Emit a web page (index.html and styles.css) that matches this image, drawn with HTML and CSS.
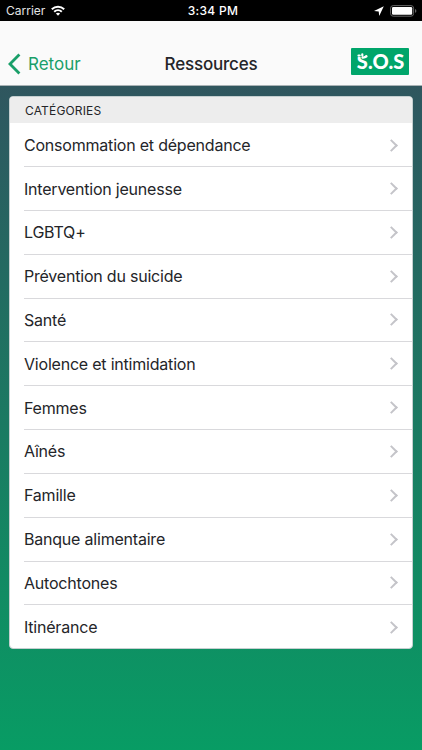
FILE: index.html
```html
<!DOCTYPE html>
<html lang="fr">
<head>
<meta charset="utf-8">
<title>Ressources</title>
<link rel="stylesheet" href="styles.css">
</head>
<body>
<div class="status">
  <div class="status-left"><span class="carrier">Carrier</span>
    <svg class="wifi" width="14" height="11" viewBox="0 0 14 11"><g fill="none" stroke="#fff" stroke-width="2"><path d="M.8 4.2C4.4.8 9.6.8 13.2 4.2"/><path d="M3.2 6.7c2.2-2.1 5.4-2.1 7.6 0"/></g><path d="M4.9 8.5c1.2-1.1 3-1.1 4.2 0L7 10.7z" fill="#fff"/></svg>
  </div>
  <div class="time">3:34 PM</div>
  <div class="status-right">
    <svg width="10" height="10" viewBox="0 0 10 10"><path d="M9.8.2 0 4.9l4.7.5.5 4.6z" fill="#fff"/></svg>
    <svg width="27" height="12" viewBox="0 0 27 12"><rect x=".6" y=".6" width="23" height="10.6" rx="2.6" fill="none" stroke="#666"/><rect x="2" y="2" width="20.2" height="7.8" rx="1.3" fill="#fff"/><path d="M25 4q1.4.5 1.4 1.9T25 7.8z" fill="#666"/></svg>
  </div>
</div>
<header class="nav">
  <div class="back">
    <svg width="13" height="22" viewBox="0 0 13 22"><path d="M11.4 1.6 2 11l9.4 9.4" fill="none" stroke="#1a9f69" stroke-width="2.8"/></svg>
    <span>Retour</span>
  </div>
  <h1 class="title">Ressources</h1>
  <div class="sos">
    <svg width="58" height="27" viewBox="0 0 58 27"><text class="sos-text" x="5.8" y="20.8" textLength="47.5">S.O.S</text><path d="M4 4h11.5v2.8L12 9.2H9.4L7 8.4H4z" fill="#00a56a"/><path d="M7.5 7.5h1.2M11.3 6.3v1.2M11.5 9.6q2.4.2 4-1.2" fill="none" stroke="#fff" stroke-width="2.2" stroke-linecap="round"/></svg>
  </div>
</header>
<main class="page">
  <section class="card">
    <h2 class="card-head">CATÉGORIES</h2>
    <ul class="list">
      <li class="row"><span>Consommation et dépendance</span><i class="chev"></i></li>
      <li class="row"><span>Intervention jeunesse</span><i class="chev"></i></li>
      <li class="row"><span>LGBTQ+</span><i class="chev"></i></li>
      <li class="row"><span>Prévention du suicide</span><i class="chev"></i></li>
      <li class="row"><span>Santé</span><i class="chev"></i></li>
      <li class="row"><span>Violence et intimidation</span><i class="chev"></i></li>
      <li class="row"><span>Femmes</span><i class="chev"></i></li>
      <li class="row"><span>Aînés</span><i class="chev"></i></li>
      <li class="row"><span>Famille</span><i class="chev"></i></li>
      <li class="row"><span>Banque alimentaire</span><i class="chev"></i></li>
      <li class="row"><span>Autochtones</span><i class="chev"></i></li>
      <li class="row"><span>Itinérance</span><i class="chev"></i></li>
    </ul>
  </section>
</main>
</body>
</html>
```
FILE: styles.css
```css
* { box-sizing: border-box; margin: 0; padding: 0; }
body {
  width: 422px; height: 750px; overflow: hidden;
  display: flex; flex-direction: column;
  font-family: Inter, "Liberation Sans", sans-serif; color: #242529;
}
.status {
  flex: none; height: 21px; background: #000; color: #fff;
  display: grid; grid-template-columns: 1fr auto 1fr; align-items: center;
  padding: 0 6px; font-size: 12px; line-height: 21px;
}
.status-left { display: flex; align-items: center; gap: 6px; }
.carrier { color: #e4e4e4; }
.time { font-weight: 500; letter-spacing: .3px; padding-left: 4px; }
.status-right { display: flex; align-items: center; justify-content: flex-end; gap: 6px; margin-right: -1px; }
.nav {
  flex: none; height: 65px; background: #fafafa; border-bottom: 1px solid #a9b2b5;
  display: grid; grid-template-columns: 1fr auto 1fr; align-items: center;
  padding: 21px 13px 0 8px;
}
.back { display: flex; align-items: center; gap: 7px; color: #1a9f69; font-size: 17px; letter-spacing: 0; }
.title { font-size: 17px; font-weight: 450; letter-spacing: -.2px; padding-left: 5px; }
.sos {
  justify-self: end; width: 58px; height: 27px; margin-top: -4px;
  background: #00a56a; border-radius: 1px;
}
.sos svg { display: block; }
.sos-text { font: 900 20px Lato, sans-serif; fill: #fff; }
.page {
  flex: 1; padding: 10px 9px 0;
  background: linear-gradient(#30565e 0, #2d5960 4%, #089c64 100%);
}
.card { height: 553px; background: #fff; border: 1px solid #c5cfd0; border-radius: 4px; overflow: hidden; }
.card-head {
  height: 26px; padding-left: 15px; background: #ededed;
  font-size: 12px; line-height: 27px; font-weight: 400; letter-spacing: .16px;
}
.list { list-style: none; padding-left: 14px; }
.row {
  height: 43.84px; padding: 0 14px 0 0; border-bottom: 1px solid #d9d9dc;
  display: flex; align-items: center; justify-content: space-between;
  font-size: 16px; letter-spacing: -.21px;
}
.row:first-child { height: 44.1px; padding-top: 1px; }
.row:last-child { border-bottom: 0; }
.chev {
  width: 9px; height: 9px; margin-right: 2px;
  border-top: 2px solid #c4c4c9; border-right: 2px solid #c4c4c9; transform: rotate(45deg);
}
```
